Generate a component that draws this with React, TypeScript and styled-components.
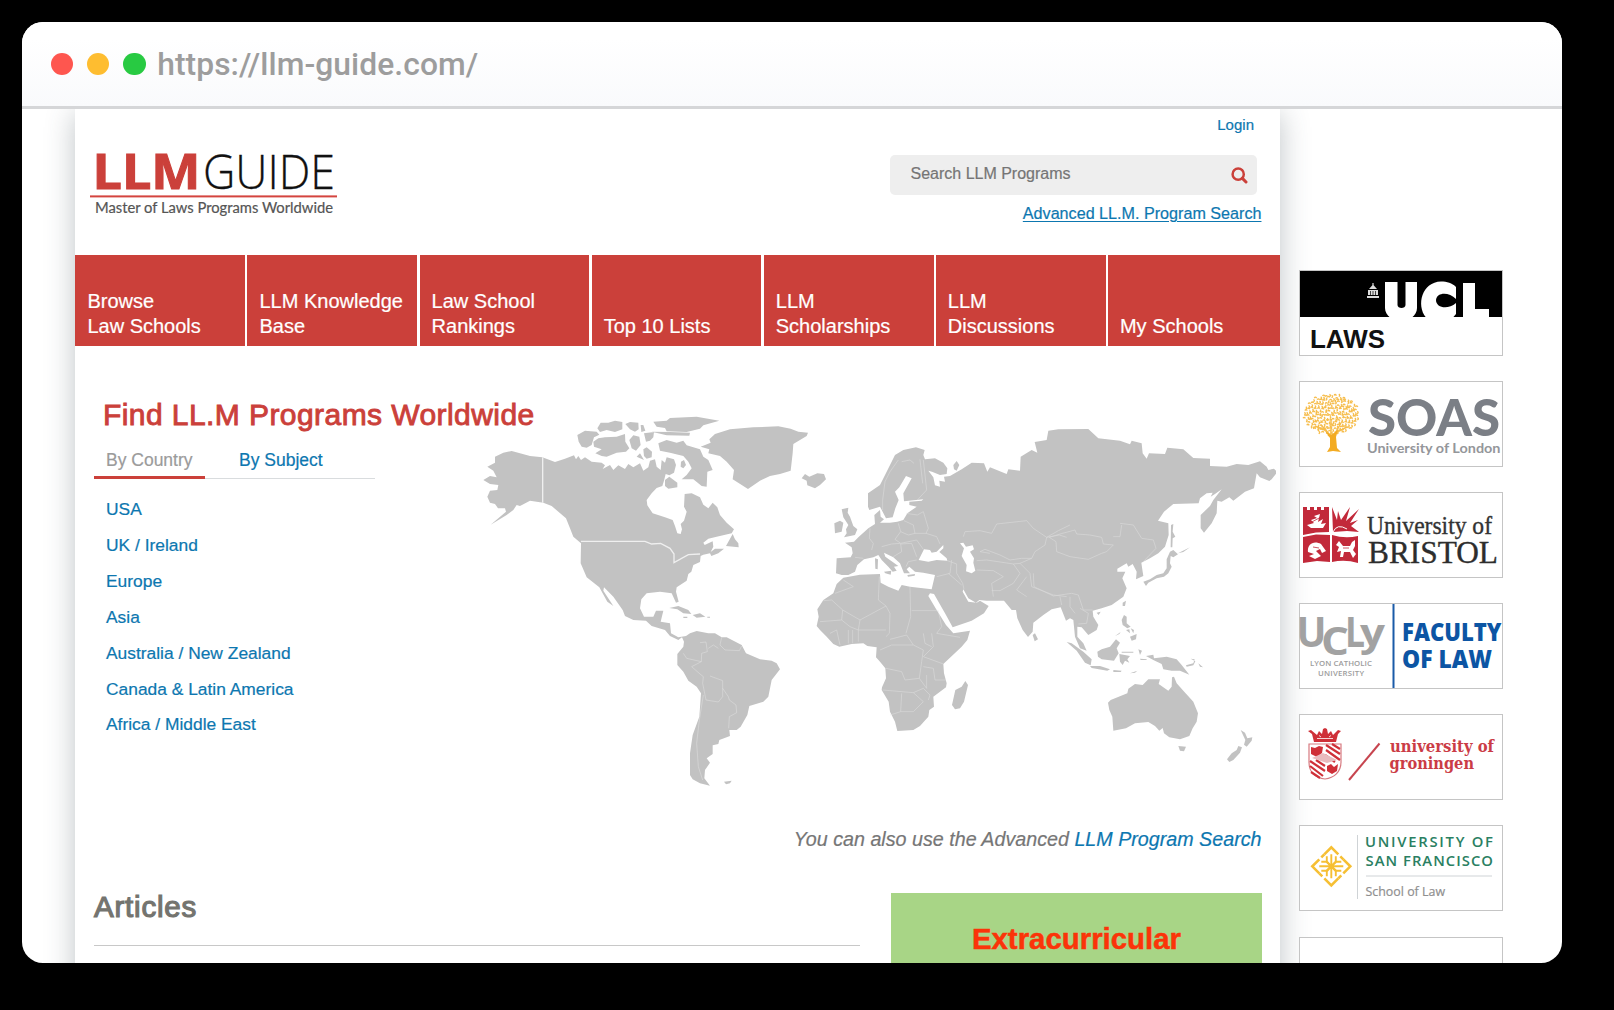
import React from "react";
import styled, { createGlobalStyle } from "styled-components";

const red = "#cb403a";
const blue = "#0d77b0";
const sans = `"Liberation Sans", Arial, sans-serif`;

const GlobalStyle = createGlobalStyle`
  *, *::before, *::after { box-sizing: border-box; }
  html, body { margin: 0; background: #000; }
  body { padding: 22px; font-family: ${sans}; overflow: hidden; height: 1010px; }
  h1, h2, ul { margin: 0; padding: 0; font-weight: 400; }
  a { color: ${blue}; text-decoration: none; }
`;

const BrowserWindow = styled.div`
  width: 1540px;
  height: 940.5px;
  background: #fff;
  border-radius: 21px;
  overflow: hidden;
  display: flex;
  flex-direction: column;
  -webkit-text-stroke: 0.2px currentColor;
`;

const TitleBar = styled.div`
  flex: none;
  height: 87px;
  padding-left: 28.6px;
  display: flex;
  align-items: center;
  background: linear-gradient(#ffffff 20%, #f9fafc);
  border-bottom: 3px solid #d5d6d8;
  position: relative;
  z-index: 1;
`;

const Dot = styled.span<{ $color: string }>`
  width: 22.3px;
  height: 22.3px;
  border-radius: 50%;
  margin-right: 14.1px;
  background: ${(p) => p.$color};
`;

const Address = styled.span`
  margin-left: -2.6px;
  font: 500 31.8px/40px Roboto, sans-serif;
  letter-spacing: 0.06px;
  color: #9d9d9d;
  -webkit-text-stroke: 0;
`;

const Viewport = styled.div`
  flex: 1;
  min-height: 0;
  display: flex;
  align-items: flex-start;
  padding-left: 53.4px;
`;

const Page = styled.main`
  flex: none;
  width: 1204.6px;
  height: 920px;
  background: #fff;
  box-shadow: 0 4px 28px rgba(55, 70, 80, 0.32);
`;

const SiteHeader = styled.header`
  height: 146px;
  display: flex;
  justify-content: space-between;
`;

const LogoLink = styled.a`
  display: block;
  margin: 40px 0 0 14.6px;
  -webkit-text-stroke: 0;
  svg { overflow: visible; }
`;

const HeaderTools = styled.div`
  display: flex;
  flex-direction: column;
  align-items: flex-end;
`;

const Login = styled.a`
  margin: 5.5px 26px 20.5px 0;
  font-size: 15px;
  line-height: 20px;
`;

const SearchBox = styled.div`
  width: 367px;
  height: 39.5px;
  margin-right: 23px;
  padding: 0 8.5px 1px 20.5px;
  display: flex;
  align-items: center;
  justify-content: space-between;
  border-radius: 5px;
  background: #eeeeee;
  font-size: 16px;
  color: #757575;
  svg { margin-top: 2px; }
`;

const AdvancedLink = styled.a`
  margin: 8px 18.5px 0 0;
  font-size: 16.15px;
  line-height: 20px;
  && { text-decoration: underline; text-underline-offset: 2px; text-decoration-thickness: 1px; }
`;

const Nav = styled.nav`
  height: 91.2px;
  display: grid;
  grid-template-columns: repeat(6, 169.8px) 1fr;
  gap: 2.3px;
`;

const NavItem = styled.a`
  display: flex;
  align-items: flex-end;
  padding: 0 10px 7.6px 12px;
  background: ${red};
  font-size: 20px;
  line-height: 25px;
  white-space: pre;
  && { color: #fff; }
`;

const Finder = styled.section`
  display: flex;
`;

const FinderMenu = styled.div`
  flex: none;
  width: 404.6px;
  padding: 50.4px 0 0 18.6px;
`;

const FinderTitle = styled.h1`
  padding-left: 9px;
  font-size: 30px;
  line-height: 36px;
  letter-spacing: 0.43px;
  white-space: nowrap;
  color: ${red};
  -webkit-text-stroke: 0.9px ${red};
`;

const Tabs = styled.div`
  width: 281px;
  height: 30.4px;
  margin-top: 16px;
  display: flex;
`;

const Tab = styled.a<{ $active?: boolean }>`
  ${(p) => (p.$active ? "width: 111px; padding-left: 12px;" : "flex: 1; padding-left: 34px;")}
  height: ${(p) => (p.$active ? 30.4 : 30)}px;
  font-size: 17.5px;
  line-height: 22px;
  border-bottom: ${(p) => (p.$active ? `3px solid ${red}` : "1px solid #d9dcde")};
  && { color: ${(p) => (p.$active ? "#9b9b9b" : blue)}; }
`;

const RegionList = styled.ul`
  margin: 13.4px 0 0 12px;
  list-style: none;
  font-size: 17.4px;
  line-height: 35.83px;
`;

const MapSvg = styled.svg`
  flex: none;
  display: block;
  margin-top: 58.7px;
`;

const Hint = styled.p`
  margin: 29.9px 18.5px 38px 0;
  text-align: right;
  font-size: 19.7px;
  line-height: 24px;
  font-style: italic;
  color: #767676;
`;

const LowerRow = styled.div`
  display: flex;
  align-items: flex-start;
  padding-left: 18.6px;
`;

const Articles = styled.section`
  width: 766px;
  height: 57px;
  border-bottom: 1px solid #c8c8c8;
`;

const ArticlesTitle = styled.h2`
  font-size: 29.5px;
  line-height: 36px;
  letter-spacing: 0.8px;
  color: #74746f;
  -webkit-text-stroke: 1.2px #74746f;
`;

const Promo = styled.aside`
  width: 370.6px;
  height: 160px;
  margin: 4px 0 0 31.2px;
  padding-top: 28.6px;
  background: #a8d586;
  text-align: center;
  font: 700 29.4px/36px ${sans};
  color: #fb3409;
  -webkit-text-stroke: 0.5px #fb3409;
`;

const Sidebar = styled.aside`
  margin: 161px 0 0 19px;
  display: flex;
  flex-direction: column;
  gap: 25.1px;
  position: relative;
  -webkit-text-stroke: 0;
`;

const SponsorCard = styled.a`
  width: 204px;
  height: 86px;
  display: block;
  background: #fff;
  border: 1px solid #c5c5c5;
  svg { display: block; margin: -1px; overflow: visible; }
`;

const Fit = ({ x, y, w, size, children, family = "Open Sans", weight = 400, fill, spaced, outline = 0 }: {
  x: number; y: number; w: number; size: number; children: string;
  family?: string; weight?: number; fill: string; spaced?: boolean; outline?: number;
}) => (
  <text x={x} y={y} textLength={w} lengthAdjust={spaced ? "spacing" : "spacingAndGlyphs"} fontSize={size}
    fontFamily={`"${family}", sans-serif`} fontWeight={weight} fill={fill}
    stroke={outline ? fill : "none"} strokeWidth={outline}>{children}</text>
);

const Logo = () => (
  <svg width="248" height="72" viewBox="0 0 248 72">
    <Fit x={2.5} y={40.3} w={108} size={47.500} weight={700} fill="#cb403a" outline={1}>LLM</Fit>
    <Fit x={113} y={40.3} w={132} size={47.5} weight={300} fill="#111" outline={0.3}>GUIDE</Fit>
    <rect x="0" y="46.4" width="247" height="2" fill="#d4453f" />
    <Fit x={5} y={63.8} w={238} size={14.8} family="Lato" fill="#555" outline={0.2}>Master of Laws Programs Worldwide</Fit>
  </svg>
);

const SearchIcon = () => (
  <svg width="17" height="17" viewBox="0 0 17 17" fill="none" stroke={red}>
    <circle cx="7.2" cy="7.2" r="5.6" strokeWidth="2.5" />
    <path d="M11.400 11.400L15 15" strokeWidth="3" strokeLinecap="round" />
  </svg>
);

const WorldMap = () => (
  <MapSvg width="796" height="392" viewBox="480 405 796 392" fill="#c2c2c2">
    <g transform="translate(470 400) scale(0.33333)">
      <path d="M75 170L100 158L125 153L150 160L180 168L217 172L255 186L285 176L312 166L318 178L325 168L333 180L345 172L365 185L395 188L405 196L398 207L420 195L430 210L445 196L465 207L475 192L490 202L510 190L520 212L535 202L540 182L555 178L560 200L572 210L575 180L585 188L590 172L612 178L618 195L612 218L598 226L587 222L582 242L577 258L560 264L545 280L530 300L532 316L548 340L585 352L608 360L615 378L622 400L632 402L636 388L632 372L642 362L650 335L642 320L644 282L665 280L690 292L700 314L715 325L728 308L742 322L750 345L770 368L792 388L785 400L740 410L715 416L700 428L704 435L728 424L730 440L722 456L735 446L762 446L745 460L724 468L720 460L700 464L692 468L690 486L670 495L664 515L655 522L650 542L620 562L618 575L626 605L618 608L605 580L570 575L530 580L514 598L510 625L522 650L550 650L558 632L580 632L572 665L600 670L603 700L625 712L648 708L660 700L680 693L715 700L735 700L755 712L770 712L815 735L828 760L870 778L905 782L920 790L930 808L905 840L895 890L880 905L838 918L832 945L812 980L800 990L778 990L780 1008L748 1020L745 1032L728 1036L728 1062L710 1075L720 1088L705 1110L703 1135L720 1157L690 1150L668 1138L660 1125L660 1060L668 1005L688 950L693 880L680 860L655 842L640 815L622 795L622 762L640 740L642 725L636 712L625 720L600 708L585 690L545 678L528 662L490 660L465 648L458 630L430 590L402 562L400 572L430 618L412 605L388 562L350 532L332 490L333 430L310 410L300 385L288 355L245 318L220 308L180 302L150 318L140 315L130 330L110 345L62 374L85 355L108 335L105 325L84 325L75 312L60 308L52 290L60 272L82 270L85 255L60 252L40 240L60 228L80 232L70 212L52 200L75 188Z" />
      <path d="M322 105L345 92L380 95L388 104L372 112L365 135L350 143L335 140L326 125ZM382 85L392 68L415 68L435 62L457 66L457 88L435 96L410 90L390 96ZM370 125L385 115L405 112L440 110L465 102L466 125L478 145L468 155L440 158L410 170L395 168L376 160L395 148L372 140ZM466 72L480 66L505 68L506 88L495 95L480 88ZM512 75L520 75L526 92L514 96ZM478 120L490 106L508 110L512 135L498 152L485 145ZM522 100L552 96L550 112L540 122L528 125ZM520 148L530 142L546 155L545 172L530 176L522 168ZM500 170L510 160L522 180ZM550 65L590 62L600 54L680 50L748 62L700 76L690 86L650 96L590 94L585 84L560 80ZM545 95L600 96L660 98L658 107L590 106ZM565 130L590 120L620 128L640 122L650 136L690 148L700 170L715 180L728 210L712 215L710 260L695 258L670 238L635 238L650 225L665 205L655 185L640 168L600 158L570 152ZM633 185L642 180L648 195L640 205L632 200ZM585 240L598 230L622 248L622 262L595 266L585 258Z" />
      <path d="M692 140L722 128L718 118L735 102L780 88L850 82L925 79L962 86L985 95L1014 98L1010 108L970 132L968 160L962 212L930 222L900 228L870 242L834 267L788 238L792 210L770 185L750 168L715 160L718 148ZM768 438L788 402L795 418L805 430L806 442ZM598 624L625 618L655 630L664 642L640 640L622 628ZM668 645L690 640L706 650L680 653ZM640 650H652V654H640ZM712 650H720V653H712ZM762 1145L785 1142L780 1150L768 1153Z" />
      <g fill="none" stroke="#efefef" strokeWidth="2.6">
        <path d="M218 172V308M333 424H525L545 432L572 430L600 445L612 462L612 488L655 464L690 462" strokeWidth="4" />
        <path d="M690 728L708 726L712 755L695 760L694 785L650 775L640 760M755 712L750 735L765 750L808 752L815 738M694 785L665 800L690 822L700 830M720 828L758 842L758 890L745 906L708 900L698 850L700 830M758 865L775 890L778 900L798 915L800 938L778 950L776 985M700 885L688 960L680 1030L685 1100L698 1140M715 745L730 735L745 745" strokeWidth="1.8" opacity=".6" />
      </g>
    </g>
    <g transform="translate(780 400) scale(0.33333)">
      <path d="M65 235L75 222L88 230L112 220L132 222L138 238L120 255L105 265L82 256L80 242ZM185 328L205 323L203 338L210 350L220 378L232 388L225 405L192 412L200 400L198 388L205 375L190 352ZM163 370L180 362L190 368L185 395L165 400ZM285 475L294 478L293 508L286 506ZM312 515L334 512L332 524L316 520ZM382 525L405 522L404 527L384 530ZM520 195L530 183L538 195L530 212L522 208ZM516 915L526 870L545 860L556 843L564 855L552 905L540 925L525 928ZM758 705L765 700L774 718L764 724Z" />
      <path d="M264 280L300 255L320 215L345 165L370 150L408 142L434 150L430 165L435 178L465 175L490 188L502 205L500 222L480 225L456 215L445 212L460 232L465 256L480 260L478 242L495 245L492 230L510 228L545 208L575 188L612 190L622 215L630 202L680 222L685 208L720 212L722 170L755 150L772 158L764 126L800 120L805 92L835 88L925 87L955 115L1020 122L1050 133L1055 122L1085 130L1088 160L1100 176L1107 160L1155 162L1162 143L1210 148L1240 174L1290 176L1290 198L1340 200L1370 192L1405 195L1440 184L1460 200L1465 210L1482 206L1492 216L1475 238L1468 243L1440 232L1430 220L1422 265L1395 275L1360 302L1348 292L1325 305L1312 302L1310 340L1295 370L1272 398L1262 385L1262 345L1290 318L1300 300L1325 268L1305 282L1292 290L1298 278L1280 280L1260 295L1256 310L1180 312L1152 335L1134 362L1165 370L1166 405L1155 440L1135 460L1110 475L1084 488L1088 515L1090 528L1068 538L1070 515L1058 492L1045 500L1040 490L1012 506L1012 515L1036 515L1027 535L1040 565L1030 590L995 615L965 625L938 632L940 650L955 675L950 690L925 705L905 682L892 680L892 710L910 730L920 752L900 745L885 710L880 660L870 655L858 662L842 622L815 628L790 645L760 668L758 695L744 711L728 690L712 655L708 630L695 630L672 602L620 602L598 600L588 608L565 595L550 568L548 575L565 605L590 608L600 602L626 618L612 640L575 662L518 682L498 645L462 582L450 580L445 588L470 630L498 675L520 700L570 692L562 720L545 740L490 792L492 820L500 850L498 862L460 890L462 920L448 930L445 950L420 978L400 990L352 993L345 965L330 935L326 905L305 870L306 862L318 835L316 805L300 785L288 772L290 742L262 738L250 730L215 732L178 740L160 732L140 710L120 690L110 678L116 650L112 628L130 600L160 580L170 552L190 533L240 524L300 522L302 548L325 560L355 572L365 555L390 560L455 568L465 525L430 518L405 515L388 500L380 508L390 520L372 520L360 490L340 472L312 458L316 470L355 498L342 500L350 512L338 515L325 500L305 480L295 465L280 472L252 478L232 495L225 515L205 525L185 525L168 520L170 475L212 472L218 460L215 442L195 428L222 425L235 412L265 385L285 372L283 345L300 330L302 350L312 358L300 368L330 368L352 365L370 360L382 340L410 320L388 315L388 305L425 302L430 298L372 304L370 280L395 235L378 228L358 262L345 275L356 300L346 325L338 352L318 355L300 320L268 330L264 320Z" />
      <g fill="#fff">
        <path d="M416 480L432 448L450 450L455 458L470 455L490 435L490 445L478 456L500 475L502 482L470 480L445 485ZM540 430L550 428L558 440L578 436L582 448L570 455L582 475L580 488L586 512L575 520L558 514L560 495L545 468L552 445Z" />
      </g>
      <g fill="none" stroke="#e8e8e8" strokeWidth="2" opacity=".6">
        <path d="M355 180L330 215L315 245L308 300L308 330M365 185L390 180L402 190M420 178L428 250M412 300L440 270L430 180M412 345L430 335L445 385L438 400L470 410L480 432M378 340L412 345M372 362L400 375L405 400L438 400M355 370L362 395L385 405L405 400M270 385L268 415L280 430L275 450M305 440L335 432L362 430L410 420L430 448M362 395L345 418L362 430M225 472L250 475M340 470L365 455L362 432L395 430L410 470M378 500L385 485L410 480M555 395L600 392L635 400L650 372L740 362L760 385L800 412L838 405L860 412M550 410L555 395M800 412L795 435L765 455L755 475L725 475L690 480L660 465L615 448L600 455L630 460M590 482L620 480L700 492L720 490M590 510L640 512L670 530L635 550L640 590M700 492L720 520L700 550L660 572L635 572M502 482L530 492L530 520L548 550L552 568M470 530L510 520L515 480M505 520L545 555M720 490L755 475M720 490L750 520L755 560L820 585L860 590M740 530L710 570L740 590" />
        <path d="M190 540L220 560L165 580M130 602L155 600L188 630L185 660L120 665M188 630L240 660L318 618L295 600L298 530M318 618L330 640L328 700L318 710M390 560L392 650L378 700M395 632L475 632M475 632L485 680L470 700L540 712M240 660L235 690L235 725M185 660L210 680L235 690L318 690M150 700L170 690L180 735M205 690L205 730M218 690L218 730M300 750L335 735L400 735L380 705L330 718M400 735L430 750L425 785L418 835L375 840L365 815L318 805M308 870L400 878L430 865L450 885L445 900M365 880L362 935M330 945L362 935L400 935L430 905L400 878M455 700L460 740L430 770L490 792M430 800L460 805L465 840L498 840M418 835L440 865L440 825M430 700L435 730L455 740" />
        <path d="M870 375L835 392L800 412M808 412L840 402L885 390L890 402L930 405L965 412L970 432L1000 435L980 455L965 460L925 478L870 470L830 455L828 425L808 412M1020 370L1060 375L1085 415L1120 420L1128 445L1090 485M1000 410L1020 410L1025 375M760 520L762 560L820 588L875 580L895 585L910 630L938 630M840 590L845 615M870 590L870 620L885 640M900 625L925 640L920 670L895 672" />
      </g>
    </g>
    <g transform="translate(1020 400) scale(0.33333)">
      <path d="M453 375L460 372L458 395L466 410L458 415L457 442L452 442ZM450 455L460 450L474 463L460 472L452 468L450 490L455 500L445 520L432 530L410 535L385 548L378 558L370 545L390 538L410 525L430 520L440 505L440 478ZM474 460L510 442L490 456ZM308 608L318 602L315 618L308 618ZM230 638L242 635L236 645ZM305 660L312 645L320 650L320 670L332 680L322 685L308 675ZM285 708L302 696L298 702ZM318 690L328 688L330 700ZM332 685L342 690L340 700ZM330 710L350 702L348 718L335 722ZM140 726L155 730L190 755L215 778L212 796L195 788L170 752ZM210 798L240 798L270 808L262 812L215 804ZM280 810L305 812L302 816H280ZM330 820L352 812L345 818ZM232 755L245 748L270 740L288 718L300 728L290 745L296 760L282 782L245 778L234 770ZM298 762L330 768L322 778L328 788L315 782L308 795L300 785ZM305 755H340V758H305ZM355 748L366 752L360 765ZM360 776L382 778L378 780H362ZM378 768L400 764L402 775L440 770L470 778L485 795L508 824L480 812L455 812L430 808L425 792L400 780ZM498 796L520 790L524 778L512 776L526 784L520 796L500 800ZM535 790L549 802L540 800ZM475 1038L498 1040L492 1054L480 1052ZM662 990L675 998L682 1015L697 1012L695 1022L680 1040L672 1034L676 1020ZM655 1038L666 1042L660 1058L640 1080L628 1086L621 1078L635 1060L650 1050Z" />
      <path d="M264 908L272 900L322 880L325 866L345 852L368 855L385 838L420 838L416 852L445 872L455 860L456 832L462 830L470 850L490 872L520 905L534 940L530 965L518 985L508 1008L480 1018L448 1012L432 1000L428 984L418 992L405 978L385 966L345 970L318 985L280 992L277 950L268 930Z" />
    </g>
  </MapSvg>
);

const navItems = [
  "Browse\nLaw Schools", "LLM Knowledge\nBase", "Law School\nRankings", "Top 10 Lists",
  "LLM\nScholarships", "LLM\nDiscussions", "My Schools",
];

const regions = [
  "USA", "UK / Ireland", "Europe", "Asia", "Australia / New Zealand",
  "Canada & Latin America", "Africa / Middle East",
];

const UclLogo = () => (
  <svg width="204" height="86">
    <rect x="1" y="1" width="202" height="46" fill="#000" />
    <path d="M68 28H80V26H68ZM69 20H79V25H69ZM70 19L74 14.5L78 19ZM73.4 13H74.6V16H73.4Z" fill="#ddd" />
    <path d="M71.5 21V25M74 21V25M76.5 21V25" stroke="#000" strokeWidth=".7" />
    <path d="M86 12H98.500V35C98.500 39 106.500 39 106.500 35V12H118V38C118 42 116 45 113 47.500H91C88 45 86 42 86 38ZM157 17V29C150 22 138 22 137 30C137 38 149 40 157 33V44L154 47.500H127C117 35 123 12 142 11.500C148 11.500 153 13 157 17ZM164 13H176V39H190V47.500H164Z" fill="#fff" />
    <Fit x={11} y={78} w={75} size={25.5} family="Liberation Sans" weight={700} fill="#111">LAWS</Fit>
  </svg>
);

const leaves = Array.from({ length: 230 }, (_, i) => {
  const r = Math.sqrt((i + 0.5) / 230);
  const a = i * 2.39996;
  return { x: 32 + Math.cos(a) * r * 27.500, y: 33 + Math.sin(a) * r * 20 + (i % 3) * 0.6, t: i % 4 };
});

const SoasLogo = () => (
  <svg width="204" height="86">
    <g stroke="#f6bd4c" strokeWidth="1.3" fill="none">
      {leaves.map((l, i) => (
        <path key={i} d={l.t % 2 ? `M${l.x - 1} ${l.y}q1 -2 2.4 0` : `M${l.x} ${l.y - 1}q2 1 0 2.4`} />
      ))}
      <path d="M32 55L22 44M34 56L42 42M32 54V38M36 52L48 46M28 50L16 45" strokeWidth="1.5" />
    </g>
    <path d="M26 50L32 54L39 49L37 56L38 67L42 71L34 70L28 71L31 66L31 57Z" fill="#f3ab22" />
    <Fit x={69} y={54.5} w={132} size={50.500} family="Lato" weight={900} fill="#7b7f86">SOAS</Fit>
    <Fit x={68} y={71.5} w={133.5} size={13.5} family="Lato" weight={700} fill="#94969a">University of London</Fit>
  </svg>
);

const BristolLogo = () => (
  <svg width="204" height="86">
    <path d="M4 15H8V18H11V15H15V18H18V15H22V18H25V15H30V40L17 40.5L4 43ZM4 45L17 42.5L31 43V70L18 69L4 71ZM33 43Q46 47 59 44V71Q46 67 33 70Z" fill="#c2293a" />
    <path d="M34 40L33 15L38 28L39 19L42 28L51 15L47 29L60 17L51 31L59 28L52 34L60 40L48 39Z" fill="#c2293a" />
    <path d="M34 40Q38 31 48 37" stroke="#fff" fill="none" />
    <g fill="#fff">
      <path d="M8 33L12 36H24L27 31L22 32L24 27L19 30L21 22L15 24L18 26L12 28L15 31Z" />
      <path d="M9 60C8 52 15 48 22 52L27 59L23 61L21 57L17 59L22 64L16 67L10 64L15 62Z" />
      <path d="M37 53L40 49L44 54L51 54L53 50L56 48L56 54L54 58L57 62L54 66L51 60L45 60L44 65L41 65L42 59L38 60L40 55Z" />
    </g>
    <path d="M11 31L22 25M14 55L20 56M44 56L50 56" stroke="#c2293a" strokeWidth=".8" />
    <Fit x={68} y={41.8} w={125} size={25} family="Liberation Serif" fill="#333" outline={0.35}>University of</Fit>
    <Fit x={69} y={70.5} w={130} size={32} family="Liberation Serif" fill="#2d2d2d" outline={0.35}>BRISTOL</Fit>
  </svg>
);

const UclyLogo = () => (
  <svg width="204" height="86">
    <Fit x={-2.5} y={43.5} w={30} size={42} weight={700} fill="#a2a2a2">U</Fit>
    <Fit x={22} y={52} w={28} size={40} weight={700} fill="#a2a2a2">C</Fit>
    <Fit x={46} y={44} w={20} size={42} weight={700} fill="#a2a2a2">L</Fit>
    <Fit x={61} y={43} w={25} size={38} weight={700} fill="#a2a2a2">y</Fit>
    <Fit x={11} y={63} w={62} size={7.8} weight={600} fill="#9c9c9c" spaced>LYON CATHOLIC</Fit>
    <Fit x={19} y={72.8} w={46} size={7.8} weight={600} fill="#9c9c9c" spaced>UNIVERSITY</Fit>
    <rect x="93.5" y="1" width="2" height="84" fill="#1a5ba8" />
    <Fit x={103} y={38.3} w={99.500} size={24} weight={800} fill="#0c55a4">FACULTY</Fit>
    <Fit x={103} y={65.3} w={90} size={24} weight={800} fill="#0c55a4">OF LAW</Fit>
  </svg>
);

const GroningenLogo = () => (
  <svg width="204" height="86">
    <g fill="#cf3038">
      <path d="M15 28L13 20L9 17L12 16L18 21L20 17L23 20L24 15L26 14L28 15L29 20L32 17L34 21L39 16L42 17L39 20L37 28ZM12 33L16 34L20 32L24 33L23 39L18 43L12 40ZM28 52L32 50L35 53L39 50L38 57L33 60L28 57Z" />
      <path d="M10 30H42V48C42 58 35 64 26 65C16 64 10 58 10 48Z" fill="none" stroke="#d77a80" strokeWidth="1.2" />
    </g>
    <path d="M18 24.500H34M20 21.500L22 23M30 23L32 21.500" stroke="#fff" strokeWidth=".8" />
    <path d="M27 31L41 40M33 30L41 35M27 36L41 46M26 41L36 48M11 47L26 57M11 52L24 62M12 58L21 64M17 46L26 52" stroke="#cf3038" strokeWidth="2.2" />
    <path d="M13 44L24 39L38 46L28 49Z" fill="#e9bbbe" />
    <path d="M50 66L80.5 29.5" stroke="#c7454f" strokeWidth="2" />
    <Fit x={91} y={37.7} w={104} size={17} family="DejaVu Serif" weight={700} fill="#cb3c46">university of</Fit>
    <Fit x={90.5} y={54.5} w={84.5} size={17} family="DejaVu Serif" weight={700} fill="#cb3c46">groningen</Fit>
  </svg>
);

const SanFranciscoLogo = () => (
  <svg width="204" height="86">
    <g transform="translate(32.3 41.3)" stroke="#f6bf33" strokeWidth="2.6" fill="none">
      {[0, 90, 180, 270].map((r) => (
        <g key={r} transform={`rotate(${r})`}>
          <path d="M-7 -12L0 -19L7 -12M9 -10L12 -7" />
          <path d="M0 0V-12M-4.5 -10V-5L0 0M4.5 -10V-5L0 0" strokeWidth="1.9" />
        </g>
      ))}
    </g>
    <path d="M58.5 10V74M67 51H193" stroke="#cfd3d6" />
    <Fit x={66} y={21.7} w={128} size={14.8} weight={600} fill="#2a8062" spaced>UNIVERSITY OF</Fit>
    <Fit x={66.5} y={40.5} w={127.5} size={14.8} weight={600} fill="#2a8062" spaced>SAN FRANCISCO</Fit>
    <Fit x={66.5} y={71} w={79.5} size={13} fill="#8f8f8f" outline={0.2}>School of Law</Fit>
  </svg>
);

const sponsors = [UclLogo, SoasLogo, BristolLogo, UclyLogo, GroningenLogo, SanFranciscoLogo];

export default function App() {
  return (
    <>
      <GlobalStyle />
      <BrowserWindow>
        <TitleBar>
          <Dot $color="#fe564f" />
          <Dot $color="#febd30" />
          <Dot $color="#28ca42" />
          <Address>https://llm-guide.com/</Address>
        </TitleBar>
        <Viewport>
          <Page>
            <SiteHeader>
              <LogoLink><Logo /></LogoLink>
              <HeaderTools>
                <Login>Login</Login>
                <SearchBox>
                  <span>Search LLM Programs</span>
                  <SearchIcon />
                </SearchBox>
                <AdvancedLink>Advanced LL.M. Program Search</AdvancedLink>
              </HeaderTools>
            </SiteHeader>
            <Nav>
              {navItems.map((item) => <NavItem key={item}>{item}</NavItem>)}
            </Nav>
            <Finder>
              <FinderMenu>
                <FinderTitle>Find LL.M Programs Worldwide</FinderTitle>
                <Tabs>
                  <Tab $active>By Country</Tab>
                  <Tab>By Subject</Tab>
                </Tabs>
                <RegionList>
                  {regions.map((r) => <li key={r}><a>{r}</a></li>)}
                </RegionList>
              </FinderMenu>
              <WorldMap />
            </Finder>
            <Hint>You can also use the Advanced <a>LLM Program Search</a></Hint>
            <LowerRow>
              <Articles><ArticlesTitle>Articles</ArticlesTitle></Articles>
              <Promo>Extracurricular</Promo>
            </LowerRow>
          </Page>
          <Sidebar>
            {sponsors.map((Sponsor, i) => <SponsorCard key={i}><Sponsor /></SponsorCard>)}
            <SponsorCard />
          </Sidebar>
        </Viewport>
      </BrowserWindow>
    </>
  );
}
